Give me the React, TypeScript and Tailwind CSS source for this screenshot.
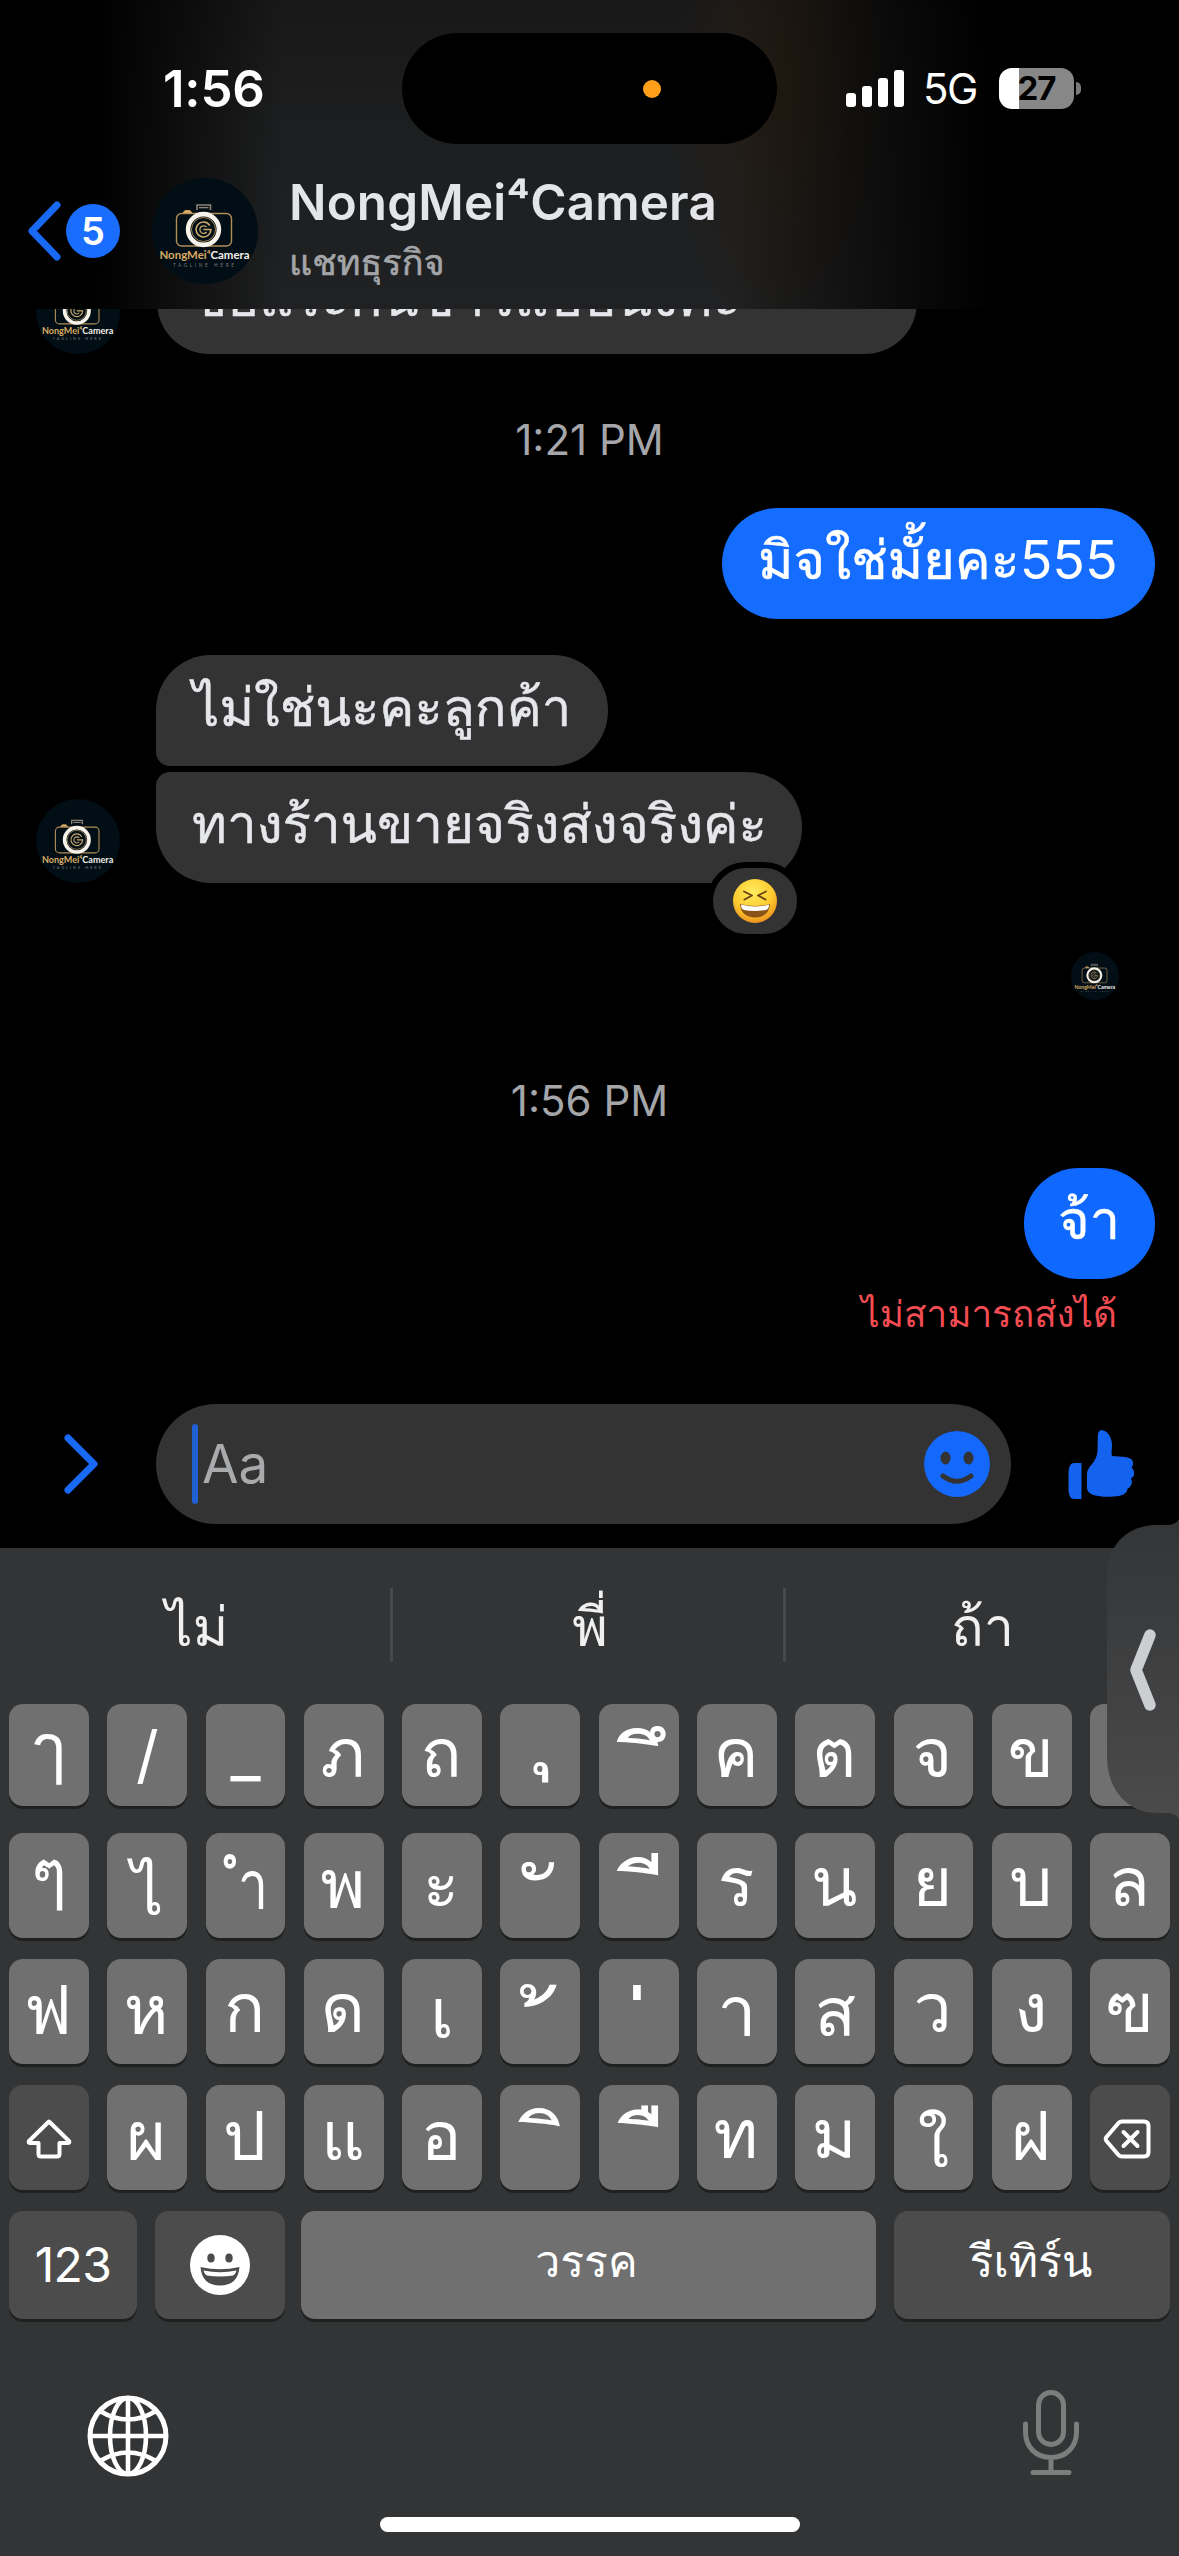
import type { ReactNode } from 'react';

function Avatar({ size }: { size: number }) {
  return (
    <svg width={size} height={size} viewBox="0 0 106 106" className="shrink-0">
      <circle cx="53" cy="53" r="53" fill="#020e16" />
      <rect x="24.5" y="35.5" width="55" height="32.5" rx="5" fill="none" stroke="#b08d57" strokeWidth="1.4" />
      <path d="M31 35 L33 32.6 H38 L40 35" fill="#d9ab62" stroke="#d9ab62" strokeWidth="1" />
      <path d="M45 32 V27 H58.5 V32" fill="none" stroke="#8b8577" strokeWidth="1.6" />
      <path d="M47 29.6 H56.5" stroke="#8b8577" strokeWidth="1.4" />
      <circle cx="51.5" cy="51.5" r="15.4" fill="#020e16" stroke="#f7f3ea" strokeWidth="4.6" />
      <circle cx="51.5" cy="51.5" r="12" fill="none" stroke="#c9a76a" strokeWidth="0.8" />
      <path d="M57.8 47.6 A7.4 7.4 0 1 0 58.9 51.6 H51.5" fill="none" stroke="#c9a76a" strokeWidth="1.5" />
      <path d="M54.6 49.2 A3.8 3.8 0 1 0 54.6 54" fill="none" stroke="#c9a76a" strokeWidth="1.3" />
      <text x="7.5" y="81" fontSize="11.4" fontFamily="Lato, sans-serif" fontWeight="700" textLength="90" lengthAdjust="spacingAndGlyphs">
        <tspan fill="#d9ab62">NongMei⁴</tspan>
        <tspan fill="#f2efe8">Camera</tspan>
      </text>
      <text x="21" y="88.8" fontSize="4.8" fontFamily="Lato, sans-serif" fill="#777a78" textLength="61">TAGLINE HERE</text>
    </svg>
  );
}

function StatusBar() {
  return (
    <div className="flex h-[177px] w-full">
      <div className="flex h-[177px] w-[402px] items-center pl-[163px]">
        <span className="text-[51px] font-semibold leading-none tracking-[-0.2px] text-white">1:56</span>
      </div>
      <div className="mt-[33px] flex h-[111px] w-[375px] items-center rounded-full bg-black pl-[241px]">
        <div className="size-[18px] rounded-full bg-[#ff9f1a]" />
      </div>
      <div className="flex h-[177px] items-center pl-[69px]">
        <div className="flex h-[37px] items-end gap-[6px]">
          <div className="h-[14px] w-[10px] rounded-[3px] bg-white" />
          <div className="h-[21px] w-[10px] rounded-[3px] bg-white" />
          <div className="h-[29px] w-[10px] rounded-[3px] bg-white" />
          <div className="h-[37px] w-[10px] rounded-[3px] bg-white" />
        </div>
        <span className="ml-[19px] w-[56px] whitespace-nowrap text-[42px] leading-none tracking-[-1.6px] text-white">5G</span>
        <div className="ml-[20px] flex h-[41px] w-[75px] items-center justify-center rounded-[13px] bg-[linear-gradient(to_right,#fff_20px,#878787_20px)] text-[33px] font-bold leading-none tracking-[-1px] text-black">27</div>
        <div className="ml-[2px] h-[13px] w-[5px] rounded-r-full bg-[#7a7a7a]" />
      </div>
    </div>
  );
}

function Header() {
  return (
    <header className="h-[309px] shrink-0 bg-[linear-gradient(to_right,#000_8%,transparent_24%,transparent_62%,#000_84%),radial-gradient(ellipse_120px_280px_at_790px_80px,#261d14,transparent),linear-gradient(#181819,#1d1e1f_40%,#202122)]">
      <StatusBar />
      <div className="flex h-[108px] items-center">
        <svg width="36" height="60" viewBox="0 0 36 60" className="ml-[26px]">
          <path d="M31 4 L6 30 L31 56" fill="none" stroke="#186af5" strokeWidth="7" strokeLinecap="round" strokeLinejoin="round" />
        </svg>
        <div className="ml-[4px] flex size-[54px] items-center justify-center rounded-full bg-[#1a6dff] text-[38px] font-semibold leading-none text-white">5</div>
        <div className="ml-[32px] flex">
          <Avatar size={106} />
        </div>
        <div className="ml-[31px] flex h-[108px] flex-col">
          <h1 className="text-[49.3px] font-semibold leading-[50px] tracking-[0.2px] text-[#e4e5e9]">NongMei⁴Camera</h1>
          <p className="mt-[12px] text-[36px] leading-[46px] text-[#a3a5a9] [-webkit-text-stroke:0.6px_#a3a5a9]">แชทธุรกิจ</p>
        </div>
      </div>
    </header>
  );
}

function LaughFace() {
  return (
    <svg width="46" height="46" viewBox="0 0 46 46">
      <defs>
        <radialGradient id="face" cx="0.45" cy="0.3" r="0.75">
          <stop offset="0" stopColor="#ffec5e" />
          <stop offset="0.6" stopColor="#fcc92e" />
          <stop offset="1" stopColor="#e8881c" />
        </radialGradient>
      </defs>
      <circle cx="23" cy="23" r="22" fill="url(#face)" />
      <path d="M12 13.5 L20 17.5 L12.5 21.5 M34 13.5 L26 17.5 L33.5 21.5" fill="none" stroke="#6b4412" strokeWidth="1.9" strokeLinecap="round" strokeLinejoin="round" />
      <path d="M8 26 Q23 30 38 26 Q37 39 23 39.5 Q9 39 8 26 Z" fill="#8a5216" />
      <path d="M9 26.5 Q23 30.5 37 26.5 Q37 31 34 32 Q23 34 12 32 Q9 31 9 26.5 Z" fill="#fff" />
    </svg>
  );
}

function Chat() {
  return (
    <main className="h-[1095px] shrink-0 text-[53px] leading-[105px] text-[#e6e7eb] [-webkit-text-stroke:0.5px_currentColor]">
      <div className="flex h-[45px] items-end overflow-hidden pl-[36px]">
        <Avatar size={84} />
        <div className="ml-[37px] h-[111px] w-[760px] whitespace-nowrap rounded-[52px] bg-[#333334] pl-[34px] leading-[108px]">ขอแระกันข่าวแบบนึงค่ะ</div>
      </div>
      <div className="flex h-[154px] items-center justify-center pt-[18px] text-[42px] leading-none text-[#a5a6aa] [-webkit-text-stroke:0px]">1:21 PM</div>
      <div className="flex justify-end pr-[24px]">
        <div className="h-[111px] w-[433px] whitespace-nowrap rounded-full bg-[#146dff] pl-[36px] text-[53.8px] leading-[104px] text-white">
          มิจใช่มั้ยคะ<span className="[-webkit-text-stroke:0px]">555</span>
        </div>
      </div>
      <div className="mt-[36px] flex pl-[156px]">
        <div className="h-[111px] w-[452px] whitespace-nowrap rounded-[55px] rounded-bl-[14px] bg-[#333334] pl-[37px] text-[52.5px]">ไม่ใช่นะคะลูกค้า</div>
      </div>
      <div className="mt-[6px] flex items-end pl-[36px]">
        <Avatar size={84} />
        <div className="relative ml-[36px] h-[111px] w-[646px] whitespace-nowrap rounded-[55px] rounded-tl-[14px] bg-[#333334] pl-[36px]">
          ทางร้านขายจริงส่งจริงค่ะ
          <div className="absolute left-[551px] top-[90px] flex h-[78px] w-[96px] items-center justify-center rounded-full border-[6px] border-black bg-[#333334]">
            <LaughFace />
          </div>
        </div>
      </div>
      <div className="mt-[69px] flex h-[48px] items-center justify-end pr-[60px]">
        <Avatar size={48} />
      </div>
      <div className="flex h-[168px] items-center justify-center pt-[34px] text-[42px] leading-none text-[#a5a6aa] [-webkit-text-stroke:0px]">1:56 PM</div>
      <div className="flex justify-end pr-[24px]">
        <div className="h-[111px] w-[131px] whitespace-nowrap rounded-[55px] bg-[#0f68ff] pl-[34px] text-[54px] leading-[103px] text-white">จ้า</div>
      </div>
      <p className="pr-[62px] text-right text-[36.8px] leading-[69px] text-[#f34c52] [-webkit-text-stroke:0px]">ไม่สามารถส่งได้</p>
    </main>
  );
}

function Composer() {
  return (
    <div className="flex h-[144px] shrink-0 items-start">
      <div className="flex h-[120px] w-full items-center">
        <svg width="36" height="60" viewBox="0 0 36 60" className="ml-[63px]">
          <path d="M5 4 L31 30 L5 56" fill="none" stroke="#186af5" strokeWidth="7" strokeLinecap="round" strokeLinejoin="round" />
        </svg>
        <div className="ml-[57px] flex h-[120px] w-[855px] items-center rounded-full bg-[#333334] pl-[36px] pr-[21px]">
          <div className="h-[80px] w-[6px] rounded-full bg-[#2160d0]" />
          <span className="ml-[4px] text-[53px] leading-none text-[#a9aaac]">Aa</span>
          <svg width="66" height="66" viewBox="0 0 66 66" className="ml-auto">
            <circle cx="33" cy="33" r="33" fill="#1468fb" />
            <ellipse cx="21.5" cy="27" rx="5" ry="6.5" fill="#333334" />
            <ellipse cx="44.5" cy="27" rx="5" ry="6.5" fill="#333334" />
            <path d="M19 45 Q33 55.5 47 45" fill="none" stroke="#333334" strokeWidth="5" strokeLinecap="round" />
          </svg>
        </div>
        <svg width="66" height="69" viewBox="0 0 66 69" className="ml-[57px]">
          <path d="M13.5 33 V69 H6 Q1 69 0.5 60 V42 Q1 33 6 33 Z" fill="#1463ee" />
          <path d="M19 44 C19 36 29 33 29.5 21 L29.8 6 Q30 0 34 0 C40 1 44 8 44 15 C44 20 43 24 44 26 L57 27 C63 28 65.5 30 65 34 Q65 36.5 63.5 37.5 Q67 41 66 45 Q65 48 63 48.5 Q65 52 62.5 56 Q61.5 58 59.5 58.5 C59.5 63 55 65.5 48 66.3 C38 67.5 19 67 19 58 Z" fill="#1463ee" />
        </svg>
      </div>
    </div>
  );
}

type KeyDef = { t: ReactNode; dark?: boolean; cls?: string };

// A no-break space carries a vowel or tone mark that stands alone on its key.
const mark = (c: string) => '\u00a0' + c;

const ShiftIcon = (
  <svg width="46" height="40" viewBox="0 0 46 40">
    <path d="M23 2.5 L43 22 Q44 24 41.5 24 H33.5 V35 Q33.5 37.5 31 37.5 H15 Q12.5 37.5 12.5 35 V24 H4.5 Q2 24 3 22 Z" fill="none" stroke="#fff" strokeWidth="4" strokeLinejoin="round" />
  </svg>
);

const DeleteIcon = (
  <svg width="48" height="40" viewBox="0 0 48 40">
    <path d="M19 2.5 H41 Q45.5 2.5 45.5 7 V33 Q45.5 37.5 41 37.5 H19 Q17 37.5 15.5 36 L3.5 22 Q2 20 3.5 18 L15.5 4 Q17 2.5 19 2.5 Z" fill="none" stroke="#fff" strokeWidth="4" strokeLinejoin="round" />
    <path d="M20.5 13 L34.5 27 M34.5 13 L20.5 27" stroke="#fff" strokeWidth="4" strokeLinecap="round" />
  </svg>
);

const HIGH = 'text-[68px] -translate-y-[5px] -translate-x-px';
const BASE = 'text-[68px] -translate-y-[3px] -translate-x-px';

const rows: { cls: string; keys: KeyDef[] }[] = [
  {
    cls: 'h-[102px]',
    keys: [
      { t: 'ๅ', cls: 'text-[68px] -translate-y-[8px]' },
      { t: '/', cls: 'text-[63px] -translate-y-px' },
      { t: '_', cls: 'text-[66px] -translate-y-[3px]' },
      { t: 'ภ', cls: BASE },
      { t: 'ถ', cls: BASE },
      { t: mark('\u0e38'), cls: 'text-[95px] translate-x-[2px] -translate-y-[32px]' },
      { t: mark('\u0e36'), cls: 'text-[90px] translate-x-[15px] translate-y-[13px]' },
      { t: 'ค', cls: BASE },
      { t: 'ต', cls: BASE },
      { t: 'จ', cls: BASE },
      { t: 'ข', cls: BASE },
      { t: '' },
    ],
  },
  {
    cls: 'mt-[27px] h-[105px]',
    keys: [
      { t: 'ๆ', cls: 'text-[68px] -translate-y-[13px]' },
      { t: 'ไ', cls: 'text-[64px] translate-y-[6px]' },
      { t: 'ำ', cls: 'text-[68px] translate-x-[8px] -translate-y-[2px] scale-x-[0.8]' },
      { t: 'พ', cls: BASE },
      { t: 'ะ', cls: BASE },
      { t: mark('\u0e31'), cls: 'text-[90px] translate-x-[2px] translate-y-[16px]' },
      { t: mark('\u0e35'), cls: 'text-[90px] translate-x-[15px] translate-y-[11px]' },
      { t: 'ร', cls: HIGH },
      { t: 'น', cls: HIGH },
      { t: 'ย', cls: HIGH },
      { t: 'บ', cls: HIGH },
      { t: 'ล', cls: HIGH },
    ],
  },
  {
    cls: 'mt-[21px] h-[105px]',
    keys: [
      { t: 'ฟ', cls: BASE },
      { t: 'ห', cls: BASE },
      { t: 'ก', cls: HIGH },
      { t: 'ด', cls: HIGH },
      { t: 'เ', cls: 'text-[70px] translate-y-px' },
      { t: mark('\u0e49'), cls: 'text-[100px] -translate-x-[1px] translate-y-[42px]' },
      { t: mark('\u0e48'), cls: 'text-[110px] -translate-x-[3px] translate-y-[46px]' },
      { t: 'า', cls: 'text-[70px] -translate-y-px' },
      { t: 'ส', cls: 'text-[68px] -translate-y-px' },
      { t: 'ว', cls: HIGH },
      { t: 'ง', cls: HIGH },
      { t: 'ฃ', cls: HIGH },
    ],
  },
  {
    cls: 'mt-[21px] h-[105px]',
    keys: [
      { t: ShiftIcon, dark: true, cls: 'translate-y-px' },
      { t: 'ผ', cls: BASE },
      { t: 'ป', cls: BASE },
      { t: 'แ', cls: BASE },
      { t: 'อ', cls: BASE },
      { t: mark('\u0e34'), cls: 'text-[90px] translate-x-[15px] translate-y-[10px]' },
      { t: mark('\u0e37'), cls: 'text-[90px] translate-x-[15px] translate-y-[11px]' },
      { t: 'ท', cls: HIGH },
      { t: 'ม', cls: HIGH },
      { t: 'ใ', cls: 'text-[64px] translate-y-[6px]' },
      { t: 'ฝ', cls: BASE },
      { t: DeleteIcon, dark: true, cls: 'translate-y-px -translate-x-[3px]' },
    ],
  },
];

function Key({ k }: { k: KeyDef }) {
  return (
    <div className={'flex h-full min-h-0 min-w-0 items-center justify-center rounded-[14px] leading-none text-white shadow-[0_3px_0_#1f2020] ' + (k.dark ? 'bg-[#4c4c4c]' : 'bg-[#707070]')}>
      <span className={'block leading-[1] ' + (k.cls ?? '')}>{k.t}</span>
    </div>
  );
}

function Keyboard() {
  return (
    <section className="relative flex h-[1008px] shrink-0 flex-col bg-[#333435]">
      <div className="mt-[40px] flex h-[74px] text-[54px] leading-[78px] text-[#f0f0f1]">
        <div className="w-[393px] border-r-[3px] border-[#47484a] pl-[4px] text-center">ไม่</div>
        <div className="w-[393px] border-r-[3px] border-[#47484a] pl-[4px] text-center">พี่</div>
        <div className="w-[393px] text-center">ถ้า</div>
      </div>
      <div className="mt-[42px] flex flex-col px-[9px]">
        {rows.map((r, i) => (
          <div key={i} className={'grid grid-cols-12 grid-rows-1 gap-x-[18.4px] ' + r.cls}>
            {r.keys.map((k, j) => (
              <Key key={j} k={k} />
            ))}
          </div>
        ))}
        <div className="mt-[21px] flex h-[108px] text-[44.5px] leading-[101px] text-white">
          <div className="w-[128px] rounded-[14px] bg-[#4c4c4c] text-center text-[48px] leading-[108px] tracking-[-0.6px] shadow-[0_3px_0_#1f2020]">123</div>
          <div className="ml-[18px] flex w-[130px] items-center justify-center rounded-[14px] bg-[#4c4c4c] shadow-[0_3px_0_#1f2020]">
            <svg width="60" height="60" viewBox="0 0 60 60">
              <circle cx="30" cy="30" r="30" fill="#fff" />
              <ellipse cx="21" cy="23" rx="3.7" ry="4.5" fill="#4c4c4c" />
              <ellipse cx="39" cy="23" rx="3.7" ry="4.5" fill="#4c4c4c" />
              <path d="M10.5 32 Q30 36.5 49.5 32 Q48 50.5 30 50.5 Q12 50.5 10.5 32 Z" fill="#4c4c4c" />
              <path d="M13.5 35.5 Q30 39 46.5 35.5 Q45.5 39.5 43 40.5 Q30 42.5 17 40.5 Q14.5 39.5 13.5 35.5 Z" fill="#fff" />
            </svg>
          </div>
          <div className="ml-[16px] w-[575px] rounded-[14px] bg-[#707070] pr-[4px] text-center shadow-[0_3px_0_#1f2020]">วรรค</div>
          <div className="ml-[18px] w-[276px] rounded-[14px] bg-[#4c4c4c] pr-[2px] text-center shadow-[0_3px_0_#1f2020]">รีเทิร์น</div>
        </div>
      </div>
      <div className="mt-[71px] flex h-[86px] items-start justify-between pl-[87px] pr-[98px]">
        <svg width="82" height="82" viewBox="0 0 82 82" fill="none" stroke="#fff" strokeWidth="4.6" className="mt-[5px]">
          <circle cx="41" cy="41" r="38" strokeWidth="5" />
          <ellipse cx="41" cy="41" rx="18" ry="38" />
          <path d="M41 3 V79 M3 41 H79 M13 16 Q41 33 69 16 M13 66 Q41 49 69 66" />
        </svg>
        <svg width="60" height="86" viewBox="0 0 60 86" fill="none" stroke="#7c7d7d" strokeWidth="5" strokeLinecap="round">
          <rect x="17.5" y="2.5" width="25" height="52" rx="12.5" />
          <path d="M4.5 34 V42 C4.5 57 15 67.5 30 67.5 C45 67.5 55.5 57 55.5 42 V34 M30 68 V82 M12 82.5 H48" />
        </svg>
      </div>
      <div className="mx-auto mt-[41px] h-[15px] w-[420px] rounded-full bg-white" />
      <svg width="72" height="300" viewBox="0 0 72 300" className="absolute right-0 top-[-29px]">
        <defs>
          <linearGradient id="tab" x1="0" y1="0" x2="0" y2="1">
            <stop offset="0" stopColor="#343537" />
            <stop offset="0.3" stopColor="#3a3b3c" />
            <stop offset="1" stopColor="#4b4b4c" />
          </linearGradient>
        </defs>
        <path d="M72 0 Q69 6 60 6 H50 C22 6 0 24 0 58 V238 C0 272 22 294 50 294 H60 Q69 294 72 300 Z" fill="url(#tab)" />
        <path d="M43 116 L29 151 L43 186" fill="none" stroke="#cdced2" strokeWidth="11.5" strokeLinecap="round" strokeLinejoin="round" />
      </svg>
    </section>
  );
}

export default function App() {
  return (
    <div className="relative flex h-[2556px] w-[1179px] flex-col overflow-hidden bg-black font-[Inter,Loma,sans-serif]">
      <Header />
      <Chat />
      <Composer />
      <Keyboard />
    </div>
  );
}
